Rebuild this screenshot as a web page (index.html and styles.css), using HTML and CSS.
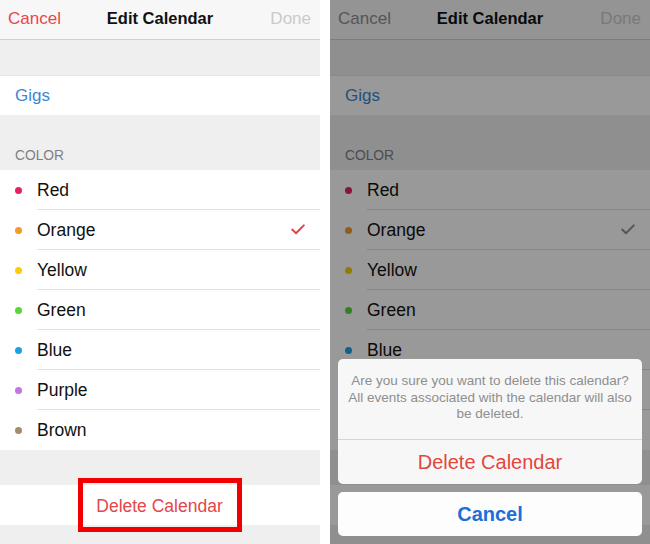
FILE: index.html
```html
<!DOCTYPE html>
<html>
<head>
<meta charset="utf-8">
<link rel="stylesheet" href="styles.css">
</head>
<body>
<div class="stage">
  <section class="phone">
    <header class="nav">
      <span class="nav-btn cancel">Cancel</span>
      <span class="nav-title">Edit Calendar</span>
      <span class="nav-btn done">Done</span>
    </header>
    <div class="gap g1"></div>
    <div class="cell name">Gigs</div>
    <div class="section-head">COLOR</div>
    <ul class="colors">
      <li class="row"><i class="dot" style="background:#e3245c"></i><span class="label">Red</span></li>
      <li class="row"><i class="dot" style="background:#f39a2c"></i><span class="label">Orange</span><svg class="check" viewBox="0 0 14 11"><path d="M1.2 5.6 L5 9.2 L12.8 1.4"/></svg></li>
      <li class="row"><i class="dot" style="background:#fbcc0e"></i><span class="label">Yellow</span></li>
      <li class="row"><i class="dot" style="background:#5dd33b"></i><span class="label">Green</span></li>
      <li class="row"><i class="dot" style="background:#1ca1e4"></i><span class="label">Blue</span></li>
      <li class="row"><i class="dot" style="background:#c177e0"></i><span class="label">Purple</span></li>
      <li class="row last"><i class="dot" style="background:#a38b6c"></i><span class="label">Brown</span></li>
    </ul>
    <div class="gap g2"></div>
    <div class="cell delete"><span class="highlight">Delete Calendar</span></div>
  </section>

  <section class="phone dimmed">
    <header class="nav">
      <span class="nav-btn cancel">Cancel</span>
      <span class="nav-title">Edit Calendar</span>
      <span class="nav-btn done">Done</span>
    </header>
    <div class="gap g1"></div>
    <div class="cell name">Gigs</div>
    <div class="section-head">COLOR</div>
    <ul class="colors">
      <li class="row"><i class="dot" style="background:#e3245c"></i><span class="label">Red</span></li>
      <li class="row"><i class="dot" style="background:#f39a2c"></i><span class="label">Orange</span><svg class="check" viewBox="0 0 14 11"><path d="M1.2 5.6 L5 9.2 L12.8 1.4"/></svg></li>
      <li class="row"><i class="dot" style="background:#fbcc0e"></i><span class="label">Yellow</span></li>
      <li class="row"><i class="dot" style="background:#5dd33b"></i><span class="label">Green</span></li>
      <li class="row"><i class="dot" style="background:#1ca1e4"></i><span class="label">Blue</span></li>
      <li class="row"></li>
      <li class="row last"></li>
    </ul>
    <div class="gap g2"></div>
    <div class="cell delete"></div>

    <div class="overlay"></div>
    <div class="sheet">
      <div class="sheet-group">
        <p class="sheet-msg">Are you sure you want to delete this calendar?<br>All events associated with the calendar will also<br>be deleted.</p>
        <div class="sheet-btn destructive">Delete Calendar</div>
      </div>
      <div class="sheet-group cancel-group">
        <div class="sheet-btn cancel-btn">Cancel</div>
      </div>
    </div>
  </section>
</div>
</body>
</html>
```

FILE: styles.css
```css
* { box-sizing: border-box; }
html, body { margin: 0; padding: 0; background: #ffffff; }
body {
  font-family: "Liberation Sans", Arial, sans-serif;
  color: #111;
  width: 650px;
  height: 544px;
  overflow: hidden;
}
.stage {
  display: flex;
  gap: 10px;
  height: 544px;
}
.phone {
  position: relative;
  width: 320px;
  height: 544px;
  background: #efeff0;
  overflow: hidden;
}
.nav {
  height: 40px;
  background: #f7f7f7;
  border-bottom: 1px solid #cfcfd2;
  display: flex;
  align-items: center;
  justify-content: space-between;
  padding: 0 9px 2px 8px;
  position: relative;
}
.nav-btn { font-size: 17px; }
.nav .cancel { color: #e8464b; }
.nav .done { color: #cacacd; }
.nav-title {
  position: absolute;
  left: 0; right: 0;
  text-align: center;
  font-weight: bold;
  font-size: 16.5px;
  pointer-events: none;
}
.gap.g1 { height: 35px; }
.cell {
  height: 40px;
  background: #fff;
  display: flex;
  align-items: center;
  font-size: 17px;
}
.cell.name {
  color: #3b86cf;
  padding-left: 15px;
  border-top: 1px solid #e6e6e8;
}
.section-head {
  height: 55px;
  font-size: 13.8px;
  color: #7f7f84;
  padding: 33px 0 0 15px;
  line-height: 16px;
}
.colors {
  list-style: none;
  margin: 0;
  padding: 0;
  background: #fff;
}
.row {
  position: relative;
  height: 40px;
  display: flex;
  align-items: center;
  padding-left: 15px;
}
.row::after {
  content: "";
  position: absolute;
  left: 37px;
  right: 0;
  bottom: 0;
  height: 1px;
  background: #e2e2e4;
}
.row.last::after { display: none; }
.dot {
  width: 7px;
  height: 7px;
  border-radius: 50%;
  margin-right: 15px;
  margin-top: 1px;
}
.label { font-size: 17.5px; }
.check {
  position: absolute;
  left: 291px;
  top: 14px;
  width: 14px;
  height: 11px;
}
.check path {
  fill: none;
  stroke: #e3424c;
  stroke-width: 2;
  stroke-linecap: round;
  stroke-linejoin: round;
}
.gap.g2 { height: 35px; }
.cell.delete {
  justify-content: center;
  color: #e4464a;
  font-size: 17.5px;
}
.highlight {
  padding: 13px 14px 10px 13px;
  border: 5px solid #f20000;
}

/* dimmed state */
.dimmed .nav .cancel { color: #8e8e93; }
.dimmed .check path { stroke: #8e8e93; }
.overlay {
  position: absolute;
  inset: 0;
  background: rgba(0, 0, 0, 0.4);
}
.sheet {
  position: absolute;
  left: 8px;
  right: 8px;
  bottom: 8px;
  display: flex;
  flex-direction: column;
  gap: 8px;
}
.sheet-group {
  background: #f7f7f7;
  border-radius: 5px;
  overflow: hidden;
}
.sheet-msg {
  margin: 0;
  height: 81px;
  padding: 14px 2px 0;
  text-align: center;
  font-size: 13.5px;
  line-height: 16.5px;
  color: #8e8e8e;
  border-bottom: 1px solid #d6d6d8;
  white-space: nowrap;
}
.sheet-btn {
  height: 44px;
  display: flex;
  align-items: center;
  justify-content: center;
  font-size: 20px;
}
.destructive { color: #e2473d; }
.cancel-group { background: #fdfdfd; }
.cancel-btn { color: #1a70d6; font-weight: bold; }
```
